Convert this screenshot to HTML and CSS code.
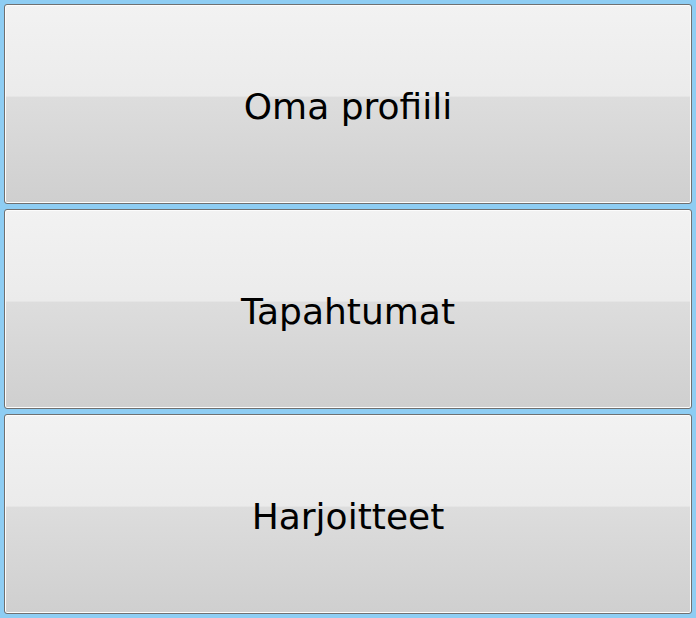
FILE: index.html
```html
<!DOCTYPE html>
<html>
<head>
<meta charset="utf-8">
<link rel="stylesheet" href="styles.css">
</head>
<body>
<div class="menu">
  <button class="btn"><span>Oma profiili</span></button>
  <button class="btn"><span>Tapahtumat</span></button>
  <button class="btn"><span>Harjoitteet</span></button>
</div>
</body>
</html>
```
FILE: styles.css
```css
html, body {
  margin: 0;
  padding: 0;
  background: #8ecdf3;
  height: 100%;
}
.menu {
  display: flex;
  flex-direction: column;
  gap: 5px;
  padding: 4px;
  height: 618px;
  box-sizing: border-box;
}
.btn {
  flex: 1;
  margin: 0;
  border: 1px solid #707070;
  border-radius: 3px;
  box-shadow: inset 0 0 0 1px #fcfcfc;
  background: linear-gradient(to bottom, #f2f2f2 0%, #ebebeb 46%, #dddddd 46.5%, #cfcfcf 100%);
  font-family: "DejaVu Sans", Verdana, sans-serif;
  font-size: 36px;
  color: #000;
  padding: 0;
  display: flex;
  align-items: center;
  justify-content: center;
}
.btn span {
  display: block;
  padding-top: 4px;
}
```
